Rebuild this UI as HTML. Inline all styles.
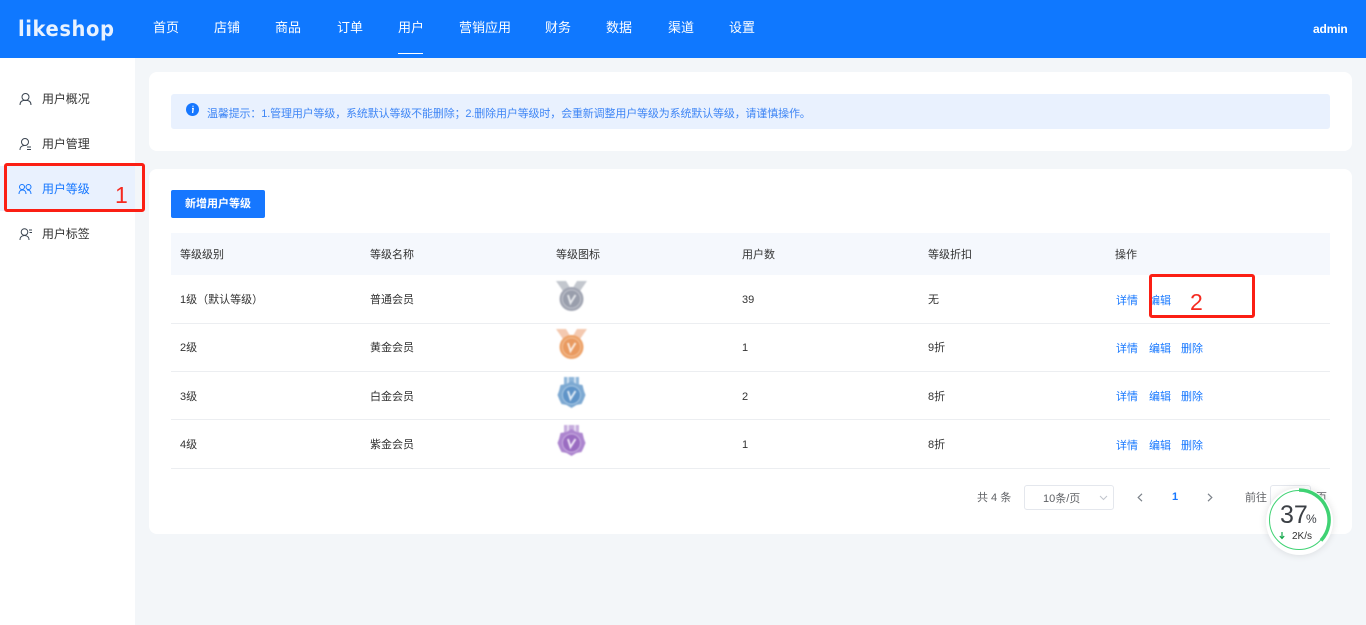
<!DOCTYPE html>
<html lang="zh-CN"><head><meta charset="utf-8"><title>likeshop</title>
<style>
*{box-sizing:border-box}
html,body{margin:0;padding:0;width:1366px;height:625px;overflow:hidden;background:#f3f6f9;font-family:"Liberation Sans","Noto Sans CJK SC",sans-serif;color:#333}
.a{position:absolute;white-space:nowrap;line-height:1}
.header{position:absolute;left:0;top:0;width:1366px;height:58px;background:#0f78ff}
.nav{color:#fff;font-size:13px;top:21px}
.side{position:absolute;left:0;top:58px;width:135px;height:567px;background:#fff}
.card{position:absolute;background:#fff;border-radius:8px}
.s{font-size:12px;left:42px;color:#333;letter-spacing:-.1px}
.t{font-size:11px;color:#333;transform:translateY(2px)}
.l{font-size:11px;color:#1677ff;transform:translateY(2px)}
.p{font-size:11px;color:#606266;transform:translateY(2px)}
.line{position:absolute;left:171px;width:1159px;height:1px;background:#eceef1}
svg{position:absolute;overflow:visible}
</style></head><body>
<div class="header"></div>
<div class="a" style="left:18px;top:19px;color:#e8f2ff;font-size:21px;font-weight:bold;letter-spacing:.6px;font-family:'DejaVu Sans',sans-serif;transform:scaleX(.93);transform-origin:left">likeshop</div>
<div class="a nav" style="left:153px">首页</div>
<div class="a nav" style="left:214px">店铺</div>
<div class="a nav" style="left:275px">商品</div>
<div class="a nav" style="left:337px">订单</div>
<div class="a nav" style="left:398px">用户</div>
<div class="a" style="left:398px;top:53px;width:25px;height:1px;background:#fff"></div>
<div class="a nav" style="left:459px">营销应用</div>
<div class="a nav" style="left:545px">财务</div>
<div class="a nav" style="left:606px">数据</div>
<div class="a nav" style="left:668px">渠道</div>
<div class="a nav" style="left:729px">设置</div>
<div class="a" style="left:1313px;top:23px;color:#fff;font-size:12px;font-weight:bold;letter-spacing:-.15px">admin</div>

<div class="side"></div>
<div class="a" style="left:0;top:166px;width:135px;height:45px;background:#e9f1fe"></div>
<div class="a s" style="top:93px">用户概况</div>
<div class="a s" style="top:138px">用户管理</div>
<div class="a s" style="top:183px;color:#1677ff">用户等级</div>
<div class="a s" style="top:228px">用户标签</div>
<svg style="left:19px;top:92px" width="13" height="14" viewBox="0 0 13 14" fill="none" stroke="#3a4450" stroke-width="1"><circle cx="6.500" cy="5" r="3.500"/><path d="M1 13c0-3 2-4.700 5.500-4.700S12 10 12 13"/></svg>
<svg style="left:19px;top:137px" width="13" height="14" viewBox="0 0 13 14" fill="none" stroke="#3a4450" stroke-width="1"><circle cx="6" cy="5" r="3.500"/><path d="M1 13c0-3 2-4.500 4.500-4.500M8 10h4M8 12.500h4"/></svg>
<svg style="left:18px;top:183px" width="14" height="13" viewBox="0 0 14 13" fill="none" stroke="#1677ff" stroke-width="1"><circle cx="4" cy="4" r="2.500"/><circle cx="10.500" cy="4" r="2.500"/><path d="M1 11c0-2 1-4 3.500-4S8 9 8 11M9 7c2.500-.3 4 1.500 4 4"/></svg>
<svg style="left:19px;top:227px" width="14" height="14" viewBox="0 0 14 14" fill="none" stroke="#3a4450" stroke-width="1"><circle cx="5.500" cy="5" r="3.300"/><path d="M1 13c0-3 2-4.500 4.500-4.500S10 10 10 13M10 3h3M10.500 5.500h2.500"/></svg>

<div class="card" style="left:149px;top:72px;width:1203px;height:79px"></div>
<div class="a" style="left:171px;top:94px;width:1159px;height:35px;background:#e9f1fe;border-radius:3px"></div>
<svg style="left:186px;top:103px" width="13" height="13" viewBox="0 0 13 13"><circle cx="6.500" cy="6.500" r="6.500" fill="#1677ff"/><path d="M6 5.500h1.200L6.600 10M7 2.800v1" stroke="#fff" stroke-width="1.300" fill="none"/></svg>
<div class="a" style="left:207px;top:109px;font-size:11px;color:#3f86f5;letter-spacing:-.15px">温馨提示：1.管理用户等级，系统默认等级不能删除；2.删除用户等级时，会重新调整用户等级为系统默认等级，请谨慎操作。</div>

<div class="card" style="left:149px;top:169px;width:1203px;height:365px"></div>
<div class="a" style="left:171px;top:190px;width:94px;height:28px;background:#1677ff;border-radius:2px;color:#fff;font-size:11px;text-align:center;line-height:29px;font-weight:bold">新增用户等级</div>
<div class="a" style="left:171px;top:233px;width:1159px;height:42px;background:#f5f8fd"></div>
<div class="a t" style="left:180px;top:248px">等级级别</div>
<div class="a t" style="left:370px;top:248px">等级名称</div>
<div class="a t" style="left:556px;top:248px">等级图标</div>
<div class="a t" style="left:742px;top:248px">用户数</div>
<div class="a t" style="left:928px;top:248px">等级折扣</div>
<div class="a t" style="left:1115px;top:248px">操作</div>

<div class="line" style="top:323px"></div><div class="line" style="top:371px"></div><div class="line" style="top:419px"></div><div class="line" style="top:468px"></div>

<div class="a t" style="left:180px;top:293px">1级（默认等级）</div><div class="a t" style="left:370px;top:293px">普通会员</div><div class="a t" style="left:742px;top:293px">39</div><div class="a t" style="left:928px;top:293px">无</div>
<div class="a t" style="left:180px;top:341px">2级</div><div class="a t" style="left:370px;top:341px">黄金会员</div><div class="a t" style="left:742px;top:341px">1</div><div class="a t" style="left:928px;top:341px">9折</div>
<div class="a t" style="left:180px;top:390px">3级</div><div class="a t" style="left:370px;top:390px">白金会员</div><div class="a t" style="left:742px;top:390px">2</div><div class="a t" style="left:928px;top:390px">8折</div>
<div class="a t" style="left:180px;top:438px">4级</div><div class="a t" style="left:370px;top:438px">紫金会员</div><div class="a t" style="left:742px;top:438px">1</div><div class="a t" style="left:928px;top:438px">8折</div>

<svg style="left:556px;top:281px;filter:blur(.9px)" width="31" height="32" viewBox="0 0 31 32"><path d="M0 0h10l6 10-7 3zM31 0H21l-6 10 7 3z" fill="#c3c7ce"/><circle cx="15.500" cy="18" r="12" fill="#a2a6b3"/><circle cx="15.500" cy="18" r="9" fill="#999eac" stroke="#bfc2cb"/><path d="M12 14l2.500 8 5-8" stroke="#e4e6ea" stroke-width="2" fill="none"/></svg>
<svg style="left:556px;top:329px;filter:blur(.9px)" width="31" height="32" viewBox="0 0 31 32"><path d="M0 0h10l6 10-7 3zM31 0H21l-6 10 7 3z" fill="#f4c9b0"/><circle cx="15.500" cy="18" r="12" fill="#eda36a"/><circle cx="15.500" cy="18" r="9" fill="#e99a60" stroke="#f2bd93"/><path d="M12 14l2.500 8 5-8" stroke="#fbeadd" stroke-width="2" fill="none"/></svg>
<svg style="left:557px;top:377px;filter:blur(.9px)" width="29" height="32" viewBox="0 0 29 32"><path d="M7 0h15v10H7z" fill="#8fb6da"/><path d="M10 0h2v10h-2zM17 0h2v10h-2z" fill="#d3e3f1"/><path d="M14.500 4l5 3 6 1 1.500 6 1.500 4-2 5-2 4-5 1-5 3-5-3-5-1-2-4-2-5 1.500-4 1.500-6 6-1z" fill="#7da9d2"/><circle cx="14.500" cy="18" r="9" fill="#5f94c8" stroke="#a8c7e3"/><path d="M11 14l2.500 8 5-8" stroke="#dfeaf5" stroke-width="2" fill="none"/></svg>
<svg style="left:557px;top:425px;filter:blur(.9px)" width="29" height="32" viewBox="0 0 29 32"><path d="M7 0h15v10H7z" fill="#c6addd"/><path d="M10 0h2v10h-2zM17 0h2v10h-2z" fill="#e7dcf1"/><path d="M14.500 4l5 3 6 1 1.500 6 1.500 4-2 5-2 4-5 1-5 3-5-3-5-1-2-4-2-5 1.500-4 1.500-6 6-1z" fill="#ad86cf"/><circle cx="14.500" cy="18" r="9" fill="#9a6cc1" stroke="#c9aee0"/><path d="M11 14l2.500 8 5-8" stroke="#eee5f6" stroke-width="2" fill="none"/></svg>

<div class="a l" style="left:1116px;top:294px">详情</div><div class="a l" style="left:1149px;top:294px">编辑</div>
<div class="a l" style="left:1116px;top:342px">详情</div><div class="a l" style="left:1149px;top:342px">编辑</div><div class="a l" style="left:1181px;top:342px">删除</div>
<div class="a l" style="left:1116px;top:390px">详情</div><div class="a l" style="left:1149px;top:390px">编辑</div><div class="a l" style="left:1181px;top:390px">删除</div>
<div class="a l" style="left:1116px;top:439px">详情</div><div class="a l" style="left:1149px;top:439px">编辑</div><div class="a l" style="left:1181px;top:439px">删除</div>

<div class="a p" style="left:977px;top:491px">共 4 条</div>
<div class="a" style="left:1024px;top:485px;width:90px;height:25px;border:1px solid #e4e7ed;border-radius:3px"></div>
<div class="a p" style="left:1043px;top:492px">10条/页</div>
<svg style="left:1099px;top:495px" width="9" height="6" viewBox="0 0 9 6" fill="none" stroke="#c0c4cc"><path d="M1 1l3.500 3.500L8 1"/></svg>
<svg style="left:1137px;top:493px" width="6" height="9" viewBox="0 0 6 9" fill="none" stroke="#7a8088" stroke-width="1.200"><path d="M5 .8L1.200 4.500 5 8.200"/></svg>
<div class="a" style="left:1172px;top:492px;font-size:11px;font-weight:bold;color:#1677ff">1</div>
<svg style="left:1207px;top:493px" width="6" height="9" viewBox="0 0 6 9" fill="none" stroke="#7a8088" stroke-width="1.200"><path d="M1 .8l3.800 3.700L1 8.200"/></svg>
<div class="a p" style="left:1245px;top:491px">前往</div>
<div class="a" style="left:1270px;top:485px;width:41px;height:25px;border:1px solid #e4e7ed;border-radius:3px"></div>
<div class="a p" style="left:1316px;top:491px">页</div>

<div class="a" style="left:1266px;top:488px;width:67px;height:67px;border-radius:50%;background:#fff;box-shadow:0 0 8px rgba(0,0,0,.12)"></div>
<svg style="left:1266px;top:487px" width="66" height="66" viewBox="0 0 66 66" fill="none"><circle cx="33" cy="33" r="29.500" stroke="#3fd273" stroke-width="1"/><path d="M33 3A30 30 0 0 1 55 53.500" stroke="#3fd273" stroke-width="3.500"/><path d="M16 45v6M13.800 49l2.200 2.500 2.200-2.500" stroke="#12a84a" stroke-width="1.200"/></svg>
<div class="a" style="left:1280px;top:503px;font-size:25px;color:#3b3f45">37</div>
<div class="a" style="left:1306px;top:513px;font-size:12px;color:#3b3f45">%</div>
<div class="a" style="left:1292px;top:532px;font-size:10px;color:#333">2K/s</div>

<div class="a" style="left:4px;top:163px;width:141px;height:49px;border:3px solid #fb1f14;border-radius:3px"></div>
<div class="a" style="left:115px;top:184px;font-size:23px;color:#f52a20">1</div>
<div class="a" style="left:1149px;top:274px;width:106px;height:44px;border:3px solid #fb1f14;border-radius:3px"></div>
<div class="a" style="left:1190px;top:291px;font-size:23px;color:#f52a20">2</div>
</body></html>
